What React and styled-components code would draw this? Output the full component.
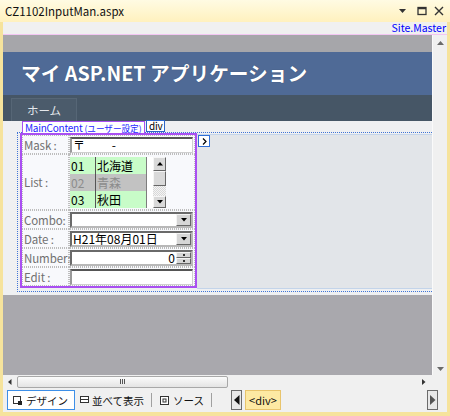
import styled, { createGlobalStyle } from "styled-components";

const GlobalStyle = createGlobalStyle`
  html, body {
    margin: 0;
    padding: 0;
  }
  body {
    width: 450px;
    height: 416px;
    overflow: hidden;
    font-family: "Noto Sans CJK JP", "Noto Sans", sans-serif;
  }
  * { box-sizing: border-box; }
`;

const Window = styled.div`
  width: 450px;
  height: 416px;
  display: flex;
  flex-direction: column;
  background: #f6e39c;
  padding: 0 3px 4px 3px;
`;

const TitleBar = styled.div`
  flex: none;
  height: 22px;
  margin: 0 -3px;
  padding: 0 6px 0 5px;
  display: flex;
  align-items: center;
  background: linear-gradient(to bottom, #fffbe3, #fff1be);
  font-size: 11.5px;
  color: #111;
`;

const TitleText = styled.span`
  flex: 1;
`;

const Controls = styled.div`
  display: flex;
  align-items: center;
  gap: 6px;
`;

const MasterBar = styled.div`
  flex: none;
  height: 13px;
  background: #f0f0f0;
  border-bottom: 1px solid #f3c6f3;
  font-size: 10.5px;
  line-height: 12px;
  color: #0000ff;
  text-align: right;
  padding-right: 1px;
`;

const Body = styled.div`
  flex: 1;
  display: flex;
  min-height: 0;
`;

const Surface = styled.div`
  flex: 1;
  display: flex;
  flex-direction: column;
  background: #a9a8ad;
`;

const TopStrip = styled.div`
  flex: none;
  height: 17px;
  background: #a6a6aa;
`;

const Header = styled.div`
  flex: none;
  height: 43px;
  background: #4f6a96;
  display: flex;
  align-items: center;
  padding: 0 0 2px 18px;
  color: #fff;
  font-size: 19.7px;
  font-weight: 700;
  text-shadow: 0 0 1px rgba(0, 0, 0, 0.35);
`;

const Nav = styled.div`
  flex: none;
  height: 26px;
  background: #465666;
  padding: 3px 0 0 8px;
`;

const NavButton = styled.div`
  width: 66px;
  height: 23px;
  background: #4b5b6b;
  border: 1px solid #566676;
  border-bottom: none;
  color: #e4e8ec;
  font-size: 11.5px;
  display: flex;
  align-items: center;
  justify-content: center;
`;

const Main = styled.div`
  flex: none;
  position: relative;
  height: 174px;
  background: #eff0f2;
  padding: 11px 0 3px 14px;
`;

const TagLabel = styled.div`
  position: absolute;
  top: ${(p) => p.$top}px;
  left: ${(p) => p.$left}px;
  height: ${(p) => p.$h}px;
  padding: 0 ${(p) => p.$pad}px;
  background: #fff;
  border: 1px solid ${(p) => p.$border};
  color: ${(p) => p.$color};
  font-size: 10px;
  letter-spacing: -0.25px;
  line-height: ${(p) => p.$h - 2}px;
  white-space: nowrap;
  z-index: 2;
`;

const TagSmall = styled.span`
  font-size: 8.6px;
  letter-spacing: 0;
`;

const Section = styled.div`
  height: 160px;
  border: 1px dotted #3f74d6;
  border-right: none;
  padding: 0 0 2px 2px;
  display: flex;
  background: #eff0f2;
`;

const ContentBox = styled.div`
  width: 177px;
  height: 155px;
  border: 2px solid #a94ff2;
  background: #f8f9fc;
  display: grid;
  grid-template-columns: 47px 126px;
  grid-template-rows: 19px 56px 19px 19px 19px 19px;
`;

const Rest = styled.div`
  flex: 1;
  margin-top: 1px;
  height: 155px;
  border-top: 1px solid #c3d4ea;
  border-bottom: 1px solid #c3d4ea;
  background: #e2e5e9;
  padding-left: 1px;
`;

const SmartTag = styled.div`
  width: 12px;
  height: 12px;
  border: 1px solid #2f6fd6;
  background: #fff;
  display: flex;
  align-items: center;
  justify-content: center;
`;

const Cell = styled.div`
  border: 1px dotted #bdbdbd;
  display: flex;
  align-items: ${(p) => (p.$top ? "flex-start" : "center")};
  padding: ${(p) => (p.$top ? "2px 0 0 0" : "0")};
`;

const Label = styled.span`
  color: #707070;
  font-size: 11.5px;
  padding-left: 1px;
  white-space: nowrap;
  letter-spacing: -0.1px;
`;

const Field = styled.div`
  position: relative;
  width: 123px;
  height: 16px;
  background: #fff;
  border-style: solid;
  border-width: ${(p) => (p.$heavy ? "2px" : "2px 1px 1px 2px")};
  border-color: ${(p) =>
    p.$heavy ? "#6a6a6a #b8b8b8 #b8b8b8 #6a6a6a" : "#555 #cfcfcf #cfcfcf #9a9a9a"};
  display: flex;
  align-items: center;
  font-size: 12px;
  color: #000;
  padding: 0 0 0 1px;
`;

const FieldText = styled.span`
  flex: 1;
  white-space: pre;
  line-height: 12px;
  text-align: ${(p) => (p.$right ? "right" : "left")};
  padding-right: ${(p) => (p.$right ? "1px" : "0")};
`;

const DropButton = styled.div`
  width: 15px;
  height: 12px;
  background: #d6d6d6;
  border: 1px solid;
  border-color: #f4f4f4 #666 #666 #f4f4f4;
  display: flex;
  align-items: center;
  justify-content: center;
`;

const Spin = styled.div`
  width: 15px;
  height: 12px;
  display: flex;
  flex-direction: column;
`;

const SpinHalf = styled.div`
  flex: 1;
  background: #d6d6d6;
  border: 1px solid;
  border-color: #f4f4f4 #666 #666 #f4f4f4;
  display: flex;
  align-items: center;
  justify-content: center;
`;

const SpinTick = styled.div`
  width: 2px;
  height: 2px;
  background: #333;
`;

const ListBox = styled.div`
  width: 96px;
  height: 51px;
  display: flex;
  background: #fff;
`;

const ListRows = styled.div`
  width: 77px;
  display: flex;
  flex-direction: column;
  border-right: 1px solid #7d7d7d;
`;

const ListRow = styled.div`
  height: 17px;
  display: flex;
  background: ${(p) => (p.$selected ? "#c2c2c2" : "#c8fcc8")};
  color: ${(p) => (p.$selected ? "#8c8c8c" : "#000")};
  font-size: 12px;
  line-height: 17px;
`;

const ListCode = styled.span`
  width: 26px;
  flex: none;
  border-right: 1px solid #555;
  padding-left: 1px;
`;

const ListName = styled.span`
  padding-left: 1px;
`;

const ListScroll = styled.div`
  width: 13px;
  margin-left: 6px;
  display: flex;
  flex-direction: column;
`;

const ScrollBtn = styled.div`
  height: ${(p) => p.$h}px;
  background: #d9d9d9;
  border: 1px solid;
  border-color: #f6f6f6 #666 #666 #f6f6f6;
  display: flex;
  align-items: center;
  justify-content: center;
`;

const ScrollTrack = styled.div`
  height: 10px;
  background-color: #f2f2f2;
  background-image: repeating-conic-gradient(#d8d8d8 0 25%, #f4f4f4 0 50%);
  background-size: 2px 2px;
`;

const VScroll = styled.div`
  width: 15px;
  background: #f0f0f0;
  border-left: 1px solid #fafafa;
  display: flex;
  flex-direction: column;
  justify-content: space-between;
  align-items: center;
  padding: 6px 0 4px;
`;

const HScrollRow = styled.div`
  flex: none;
  height: 13px;
  display: flex;
  background: #f0f0f0;
`;

const HScroll = styled.div`
  flex: 1;
  display: flex;
  align-items: center;
  padding: 0 6px 0 5px;
`;

const HThumb = styled.div`
  width: 211px;
  height: 12px;
  margin-left: 5px;
  border: 1px solid #a8a8a8;
  border-radius: 2px;
  background: linear-gradient(to bottom, #fbfbfb, #e4e4e4);
  display: flex;
  align-items: center;
  justify-content: center;
  gap: 1px;
`;

const Grip = styled.div`
  width: 1px;
  height: 5px;
  background: #555;
`;

const HSpacer = styled.div`
  flex: 1;
`;

const Corner = styled.div`
  width: 15px;
  background: #f0f0f0;
`;

const TabBar = styled.div`
  flex: none;
  height: 24px;
  background: #f0f0f0;
  display: flex;
  align-items: center;
  padding: 0 9px 0 4px;
  font-size: 10.5px;
  color: #111;
`;

const Tab = styled.div`
  height: 20px;
  display: flex;
  align-items: center;
  gap: ${(p) => p.$gap || 4}px;
  padding: 0 ${(p) => p.$pr || 4}px 0 ${(p) => p.$pl || 4}px;
  background: ${(p) => (p.$active ? "#fff" : "transparent")};
  border: 1px solid ${(p) => (p.$active ? "#3d8fe8" : "transparent")};
  white-space: nowrap;
`;

const Sep = styled.div`
  width: 1px;
  height: 14px;
  background: #a0a0a0;
  margin: 0 ${(p) => p.$m || 3}px 0 ${(p) => p.$ml || 2}px;
`;

const NavArrow = styled.div`
  width: 11px;
  height: 20px;
  border: 1px solid #6b6b6b;
  background: #e8e8e8;
  display: flex;
  align-items: center;
  justify-content: center;
  margin-left: ${(p) => p.$ml || 0}px;
`;

const Crumb = styled.div`
  height: 20px;
  margin-left: 3px;
  padding: 0 3px;
  background: #fde9a3;
  border: 1px solid #e8c46c;
  font-size: 11px;
  display: flex;
  align-items: center;
`;

const Fill = styled.div`
  flex: 1;
`;

const Tri = ({ dir = "down", size = 5, color = "#000" }) => {
  const h = size / 2 + 0.5;
  const pts = {
    down: `0,0 ${size},0 ${size / 2},${h}`,
    up: `0,${h} ${size},${h} ${size / 2},0`,
    left: `${h},0 ${h},${size} 0,${size / 2}`,
    right: `0,0 0,${size} ${h},${size / 2}`,
  }[dir];
  const vertical = dir === "up" || dir === "down";
  return (
    <svg
      width={vertical ? size : h + 0.5}
      height={vertical ? h + 0.5 : size}
      style={{ display: "block" }}
    >
      <polygon points={pts} fill={color} />
    </svg>
  );
};

const DesignIcon = () => (
  <svg width="9" height="9" style={{ display: "block" }}>
    <rect x="0.5" y="0.5" width="7" height="7" fill="#fff" stroke="#333" />
    <rect x="5" y="5" width="4" height="4" fill="#222" />
  </svg>
);

const SplitIcon = () => (
  <svg width="9" height="8" style={{ display: "block" }}>
    <rect x="0.5" y="0.5" width="8" height="6" fill="#fff" stroke="#333" />
    <line x1="0.5" y1="3.5" x2="8.5" y2="3.5" stroke="#333" />
  </svg>
);

const SourceIcon = () => (
  <svg width="9" height="9" style={{ display: "block" }}>
    <rect x="0.5" y="0.5" width="8" height="8" fill="#fff" stroke="#333" />
    <rect x="3" y="3" width="3" height="3" fill="none" stroke="#333" />
  </svg>
);

const rows = [
  { code: "01", name: "北海道" },
  { code: "02", name: "青森", selected: true },
  { code: "03", name: "秋田" },
];

export default function App() {
  return (
    <>
      <GlobalStyle />
      <Window>
        <TitleBar>
          <TitleText>CZ1102InputMan.aspx</TitleText>
          <Controls>
            <svg width="8" height="6" style={{ display: "block" }}>
              <polygon points="0,1 7,1 3.5,5" fill="#333" />
            </svg>
            <svg width="10" height="10" style={{ display: "block", marginLeft: 4 }}>
              <rect x="1" y="1.5" width="8" height="7" fill="none" stroke="#333" strokeWidth="1.3" />
              <line x1="1" y1="2.5" x2="9" y2="2.5" stroke="#333" strokeWidth="1.5" />
            </svg>
            <svg width="10" height="10" style={{ display: "block", marginLeft: 1 }}>
              <path d="M1 1 L9 9 M9 1 L1 9" stroke="#333" strokeWidth="1.4" />
            </svg>
          </Controls>
        </TitleBar>
        <MasterBar>Site.Master</MasterBar>
        <Body>
          <Surface>
            <TopStrip />
            <Header>マイ ASP.NET アプリケーション</Header>
            <Nav>
              <NavButton>ホーム</NavButton>
            </Nav>
            <Main>
              <TagLabel $top={0} $left={19} $h={13} $pad={2} $border="#a94ff2" $color="#1f1fff">
                MainContent <TagSmall>(ユーザー設定)</TagSmall>
              </TagLabel>
              <TagLabel $top={-1} $left={143} $h={12} $pad={2} $border="#2f66c8" $color="#000">
                div
              </TagLabel>
              <Section>
                <ContentBox>
                  <Cell>
                    <Label>Mask :</Label>
                  </Cell>
                  <Cell>
                    <Field>
                      <FieldText>{"〒　　 -"}</FieldText>
                    </Field>
                  </Cell>

                  <Cell>
                    <Label>List :</Label>
                  </Cell>
                  <Cell $top>
                    <ListBox>
                      <ListRows>
                        {rows.map((r) => (
                          <ListRow key={r.code} $selected={r.selected}>
                            <ListCode>{r.code}</ListCode>
                            <ListName>{r.name}</ListName>
                          </ListRow>
                        ))}
                      </ListRows>
                      <ListScroll>
                        <ScrollBtn $h={14}>
                          <Tri dir="up" size={6} />
                        </ScrollBtn>
                        <ScrollBtn $h={15} />
                        <ScrollTrack />
                        <ScrollBtn $h={12}>
                          <Tri dir="down" size={6} />
                        </ScrollBtn>
                      </ListScroll>
                    </ListBox>
                  </Cell>

                  <Cell>
                    <Label>Combo:</Label>
                  </Cell>
                  <Cell>
                    <Field $heavy>
                      <FieldText />
                      <DropButton>
                        <Tri dir="down" size={6} />
                      </DropButton>
                    </Field>
                  </Cell>

                  <Cell>
                    <Label>Date :</Label>
                  </Cell>
                  <Cell>
                    <Field $heavy>
                      <FieldText>H21年08月01日</FieldText>
                      <DropButton>
                        <Tri dir="down" size={6} />
                      </DropButton>
                    </Field>
                  </Cell>

                  <Cell>
                    <Label>Number:</Label>
                  </Cell>
                  <Cell>
                    <Field $heavy>
                      <FieldText $right>0</FieldText>
                      <Spin>
                        <SpinHalf>
                          <SpinTick />
                        </SpinHalf>
                        <SpinHalf>
                          <SpinTick />
                        </SpinHalf>
                      </Spin>
                    </Field>
                  </Cell>

                  <Cell>
                    <Label>Edit :</Label>
                  </Cell>
                  <Cell>
                    <Field>
                      <FieldText />
                    </Field>
                  </Cell>
                </ContentBox>
                <Rest>
                  <SmartTag>
                    <svg width="5" height="7" style={{ display: "block" }}>
                      <path d="M1 0.5 L4 3.5 L1 6.5" fill="none" stroke="#000" strokeWidth="1.2" />
                    </svg>
                  </SmartTag>
                </Rest>
              </Section>
            </Main>
            <Fill />
          </Surface>
          <VScroll>
            <Tri dir="up" size={7} color="#6a6a6a" />
            <Tri dir="down" size={7} color="#6a6a6a" />
          </VScroll>
        </Body>
        <HScrollRow>
          <HScroll>
            <Tri dir="left" size={6} color="#333" />
            <HThumb>
              <Grip />
              <Grip />
              <Grip />
            </HThumb>
            <HSpacer />
            <Tri dir="right" size={6} color="#333" />
          </HScroll>
          <Corner />
        </HScrollRow>
        <TabBar>
          <Tab $active $pl={5} $pr={6}>
            <DesignIcon />
            デザイン
          </Tab>
          <Tab $gap={3}>
            <SplitIcon />
            並べて表示
          </Tab>
          <Sep />
          <Tab>
            <SourceIcon />
            ソース
          </Tab>
          <Sep $ml={2} $m={3} />
          <NavArrow $ml={16}>
            <Tri dir="left" size={10} color="#111" />
          </NavArrow>
          <Crumb>&lt;div&gt;</Crumb>
          <Fill />
          <NavArrow>
            <Tri dir="right" size={10} color="#555" />
          </NavArrow>
        </TabBar>
      </Window>
    </>
  );
}
